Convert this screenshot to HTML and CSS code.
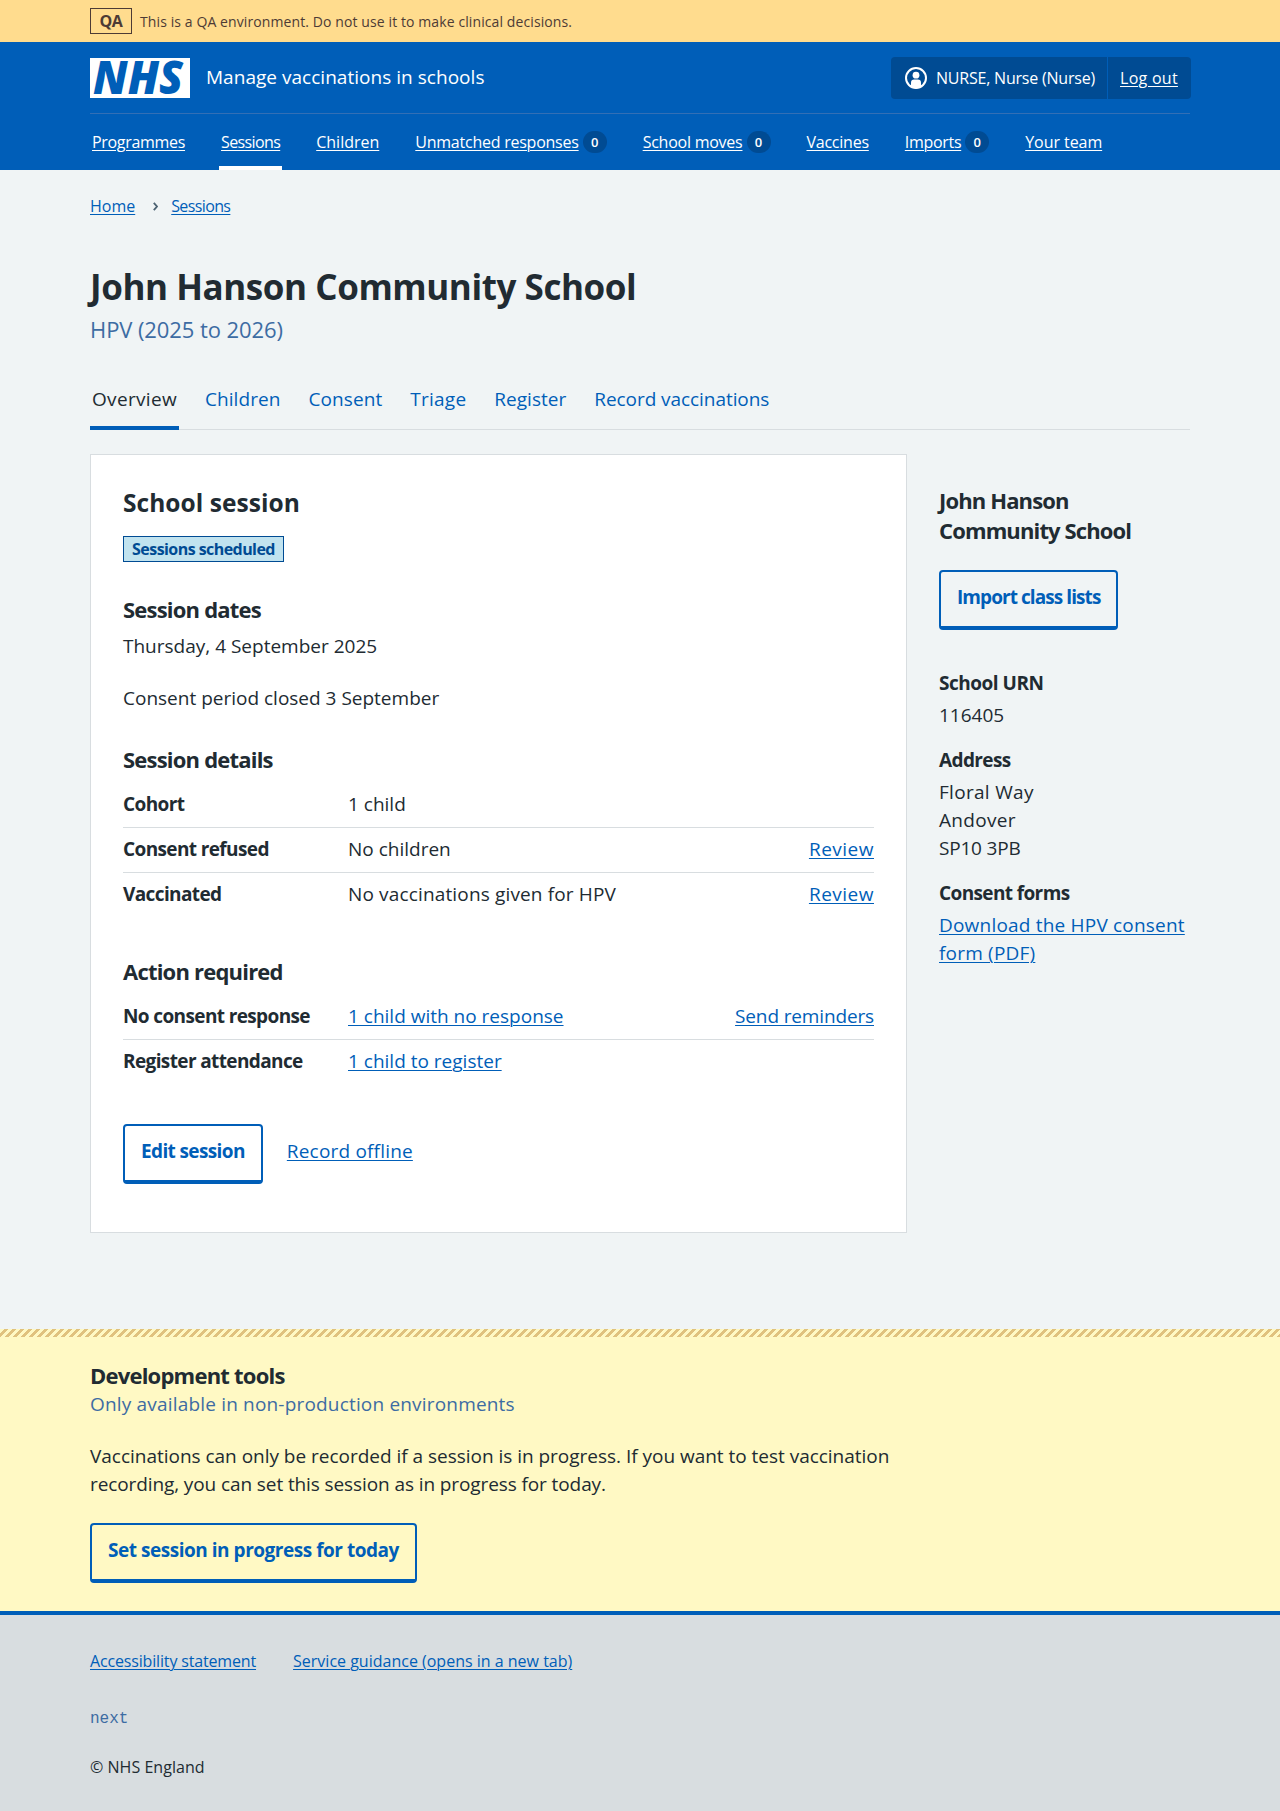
FILE: index.html
```html
<!DOCTYPE html>
<html lang="en">
<head>
<meta charset="utf-8">
<title>John Hanson Community School – Manage vaccinations in schools</title>
<link rel="stylesheet" href="styles.css">
</head>
<body>
<div class="banner">
  <div class="container banner-inner">
    <strong class="banner-tag">QA</strong>
    <span class="banner-text">This is a QA environment. Do not use it to make clinical decisions.</span>
  </div>
</div>

<header class="header">
  <div class="container">
    <div class="header-top">
      <div class="brand">
        <svg class="logo" viewBox="0 0 100 40" width="100" height="40" role="img" aria-label="NHS">
          <rect width="100" height="40" fill="#fff"/>
          <text class="logo-text" x="3" y="36.3" textLength="90" lengthAdjust="spacingAndGlyphs">NHS</text>
        </svg>
        <span class="service">Manage vaccinations in schools</span>
      </div>
      <div class="account">
        <div class="account-user">
          <svg width="22" height="22" viewBox="0 0 22 22" aria-hidden="true">
            <circle cx="11" cy="11" r="10" fill="none" stroke="#fff" stroke-width="2"/>
            <circle cx="11" cy="8.2" r="3.4" fill="#fff"/>
            <path d="M6 20v-4.2a3.2 3.2 0 0 1 3.2-3.2h3.6a3.2 3.2 0 0 1 3.2 3.2V20a10 10 0 0 1-10 0z" fill="#fff"/>
          </svg>
          <span class="user-name">NURSE, Nurse (Nurse)</span>
        </div>
        <div class="account-out"><a class="logout" href="#">Log out</a></div>
      </div>
    </div>
    <nav class="nav">
      <div class="nav-item"><a class="n1" href="#">Programmes</a></div>
      <div class="nav-item current"><a class="n2" href="#">Sessions</a></div>
      <div class="nav-item"><a href="#">Children</a></div>
      <div class="nav-item"><a class="n3" href="#">Unmatched responses</a><span class="count">0</span></div>
      <div class="nav-item"><a class="n3" href="#">School moves</a><span class="count">0</span></div>
      <div class="nav-item"><a class="n3" href="#">Vaccines</a></div>
      <div class="nav-item"><a class="n1" href="#">Imports</a><span class="count">0</span></div>
      <div class="nav-item"><a class="n4" href="#">Your team</a></div>
    </nav>
  </div>
</header>

<main class="container main">
  <nav class="breadcrumb">
    <a href="#">Home</a>
    <svg width="5" height="9" viewBox="0 0 5 9" aria-hidden="true"><path d="M.8.8 4 4.5.8 8.2" fill="none" stroke="#4c6272" stroke-width="1.8"/></svg>
    <a class="n2" href="#">Sessions</a>
  </nav>
  <h1 class="title">John Hanson Community School</h1>
  <p class="caption">HPV (2025 to 2026)</p>

  <nav class="tabs">
    <a class="tab selected t-over" href="#">Overview</a>
    <a class="tab" href="#">Children</a>
    <a class="tab" href="#">Consent</a>
    <a class="tab t-tri" href="#">Triage</a>
    <a class="tab t-reg" href="#">Register</a>
    <a class="tab t-rec" href="#">Record vaccinations</a>
  </nav>

  <div class="columns">
    <section class="card">
      <h2 class="card-title">School session</h2>
      <div><strong class="tag">Sessions scheduled</strong></div>

      <h3 class="heading">Session dates</h3>
      <p class="para">Thursday, 4 September 2025</p>
      <p class="para second">Consent period closed 3 September</p>

      <h3 class="heading">Session details</h3>
      <dl class="summary">
        <div class="row"><dt>Cohort</dt><dd>1 child</dd></div>
        <div class="row"><dt>Consent refused</dt><dd>No children</dd><dd class="act"><a class="review" href="#">Review</a></dd></div>
        <div class="row"><dt>Vaccinated</dt><dd class="vacc">No vaccinations given for HPV</dd><dd class="act"><a class="review" href="#">Review</a></dd></div>
      </dl>

      <h3 class="heading action">Action required</h3>
      <dl class="summary">
        <div class="row"><dt>No consent response</dt><dd><a href="#">1 child with no response</a></dd><dd class="act"><a class="send" href="#">Send reminders</a></dd></div>
        <div class="row"><dt>Register attendance</dt><dd><a href="#">1 child to register</a></dd></div>
      </dl>

      <div class="actions">
        <a class="button edit" href="#">Edit session</a>
        <a class="offline" href="#">Record offline</a>
      </div>
    </section>

    <aside class="side">
      <h2 class="side-title">John Hanson Community School</h2>
      <a class="button import" href="#">Import class lists</a>
      <dl class="facts">
        <dt class="urn">School URN</dt><dd>116405</dd>
        <dt>Address</dt><dd class="address">Floral Way<br>Andover<br><span class="postcode">SP10 3PB</span></dd>
        <dt>Consent forms</dt><dd><a class="dl" href="#">Download the HPV consent form (PDF)</a></dd>
      </dl>
    </aside>
  </div>
</main>

<section class="dev">
  <div class="container">
    <h2 class="dev-title">Development tools</h2>
    <p class="dev-caption">Only available in non-production environments</p>
    <p class="dev-text">Vaccinations can only be recorded if a session is in progress. If you want to test vaccination <span class="dev-rest">recording, you can set this session as in progress for today.</span></p>
    <a class="button set" href="#">Set session in progress for today</a>
  </div>
</section>

<footer class="footer">
  <div class="container">
    <div class="footer-links">
      <a class="acc" href="#">Accessibility statement</a>
      <a href="#">Service guidance (opens in a new tab)</a>
    </div>
    <p class="version">next</p>
    <p class="copyright">© NHS England</p>
  </div>
</footer>
</body>
</html>
```
FILE: styles.css
```css
* { box-sizing: border-box; }
body {
  margin: 0;
  background: #f0f4f5;
  color: #212b32;
  font: 400 19px/28px "Open Sans", "Noto Sans", sans-serif;
}
h1, h2, h3, p, dl, dd, dt { margin: 0; }
h1, h2, h3, dt, strong { font-weight: 700; }
a {
  color: #005eb8;
  text-decoration: underline;
  text-decoration-thickness: 1px;
  text-underline-offset: 2px;
  text-decoration-skip-ink: auto;
}
svg { display: block; flex: none; }
.container { width: 1100px; margin: 0 auto; }

/* Environment banner */
.banner { height: 42px; background: #ffdc8e; color: #4d3b35; }
.banner-inner { display: flex; align-items: center; gap: 8px; height: 42px; }
.banner-tag {
  width: 42px; height: 26px; border: 1px solid #4d3b35;
  font-size: 16px; line-height: 25px; text-align: center; letter-spacing: -.3px;
}
.banner-text { font-size: 14px; line-height: 24px; letter-spacing: .1px; padding-top: 1px; }

/* Header */
.header { background: #005eb8; color: #fff; }
.header a { color: #fff; }
.header-top {
  display: flex; justify-content: space-between; align-items: center;
  height: 72px; border-bottom: 1px solid #336fb5;
}
.brand { display: flex; align-items: center; gap: 16px; }
.logo { overflow: visible; }
.logo-text { font: italic 800 46px "Open Sans", sans-serif; fill: #005eb8; }
.service { padding-bottom: 2px; letter-spacing: .03px; }
.account { display: flex; height: 42px; margin-right: -1px; background: #004b93; border-radius: 4px; font-size: 16px; line-height: 24px; }
.account-user { display: flex; align-items: center; gap: 9px; width: 216px; padding-left: 14px; }
.user-name { letter-spacing: -.21px; white-space: nowrap; }
.account-out { display: flex; align-items: center; width: 84px; padding-left: 12px; border-left: 1px solid #005eb8; }
.logout { letter-spacing: .28px; }
.nav { display: flex; gap: 32px; height: 56px; font-size: 16px; line-height: 24px; }
.nav-item { display: flex; align-items: center; gap: 4px; height: 56px; padding: 4px 2px 0; border-bottom: 4px solid transparent; white-space: nowrap; }
.nav-item.current { border-color: #fff; }
.n1 { letter-spacing: -.31px; }
.n2 { letter-spacing: -.62px; }
.n3 { letter-spacing: -.24px; }
.n4 { letter-spacing: -.06px; }
.count {
  width: 24px; height: 22px; border-radius: 12px; background: #004b93;
  font-size: 13px; font-weight: 600; line-height: 23px; text-align: center;
}

/* Page heading */
.breadcrumb { display: flex; align-items: center; height: 24px; margin-top: 24px; font-size: 16px; line-height: 24px; }
.breadcrumb svg { margin: 0 13px 0 18px; }
.title { margin-top: 45px; font-size: 35px; line-height: 48px; letter-spacing: -.43px; }
.caption { margin-top: 2px; color: #3d6ca3; font-size: 22px; line-height: 32px; letter-spacing: -.08px; }
.tabs { display: flex; gap: 24px; height: 60px; margin-top: 25px; border-bottom: 1px solid #d8dde0; }
.tab { height: 60px; padding: 15px 2px 0; letter-spacing: .08px; text-decoration: none; white-space: nowrap; }
.tab.selected { color: #212b32; border-bottom: 4px solid #005eb8; }
.t-over { letter-spacing: .32px; }
.t-tri { letter-spacing: .24px; }
.t-reg { letter-spacing: .02px; }
.t-rec { letter-spacing: -.06px; }

.columns { display: flex; gap: 32px; margin-top: 24px; }

/* Session card */
.card { width: 817px; height: 779px; padding: 32px; background: #fff; border: 1px solid #d8dde0; }
.card-title { font-size: 24.5px; line-height: 32px; letter-spacing: .05px; }
.tag {
  display: block; width: 161px; height: 26px; margin-top: 17px;
  background: #c1e3ef; border: 1px solid #004b93; color: #004b93;
  font-size: 16px; line-height: 24px; letter-spacing: -.56px; text-align: center; white-space: nowrap;
}
.heading { margin-top: 32px; font-size: 22px; line-height: 30px; letter-spacing: -.79px; }
.heading.action { margin-top: 39px; }
.para { margin-top: 8px; }
.para.second { margin-top: 24px; }
.summary { margin-top: 9px; }
.row { display: flex; padding: 7px 0 9px; border-bottom: 1px solid #d8dde0; }
.row:last-child { border-bottom: 0; }
.row dt { width: 225px; letter-spacing: -.62px; }
.act { margin-left: auto; }
.review { letter-spacing: .5px; }
.vacc { letter-spacing: .15px; }
.send { letter-spacing: -.14px; }
.actions { display: flex; gap: 24px; margin-top: 40px; }
.button {
  display: inline-block; height: 60px; padding: 11px 16px 0;
  border: 2px solid #005eb8; border-bottom-width: 4px; border-radius: 4px;
  font-weight: 700; text-decoration: none; white-space: nowrap;
}
.edit { letter-spacing: -.62px; }
.import { letter-spacing: -.93px; }
.set { letter-spacing: -.47px; }
.offline { margin-top: 13px; letter-spacing: .19px; }

/* School details */
.side { width: 251px; padding-top: 31px; }
.side-title { width: 220px; margin-bottom: 25px; font-size: 22px; line-height: 30px; letter-spacing: -.87px; }
.facts { margin-top: 39px; }
.facts dt { letter-spacing: -.62px; }
.facts .urn { letter-spacing: -.48px; }
.facts dd { margin: 4px 0 17px; }
.facts .address { letter-spacing: .3px; }
.postcode { letter-spacing: -.2px; }
.dl { letter-spacing: .2px; }

/* Development tools */
.dev {
  height: 286px; margin-top: 96px; padding-top: 31px;
  border-bottom: 4px solid #005eb8;
  background: linear-gradient(135deg, transparent 25%, #e0c27e 25% 50%, transparent 50% 75%, #e0c27e 75%) 0 0 / 8px 8px repeat-x #fff9c4;
}
.dev-title { font-size: 22px; line-height: 30px; letter-spacing: -.78px; }
.dev-caption { color: #3d6ca3; letter-spacing: .18px; }
.dev-text { width: 817px; margin: 24px 0 25px; letter-spacing: -.02px; }
.dev-rest { letter-spacing: -.1px; }

/* Footer */
.footer { height: 196px; padding-top: 34px; background: #d8dde0; font-size: 16px; line-height: 24px; }
.footer-links { display: flex; gap: 37px; }
.acc { letter-spacing: -.16px; }
.version { margin-top: 34px; color: #3d6ca3; font: 16px/24px "Liberation Mono", monospace; }
.copyright { margin-top: 24px; letter-spacing: .03px; }
```
